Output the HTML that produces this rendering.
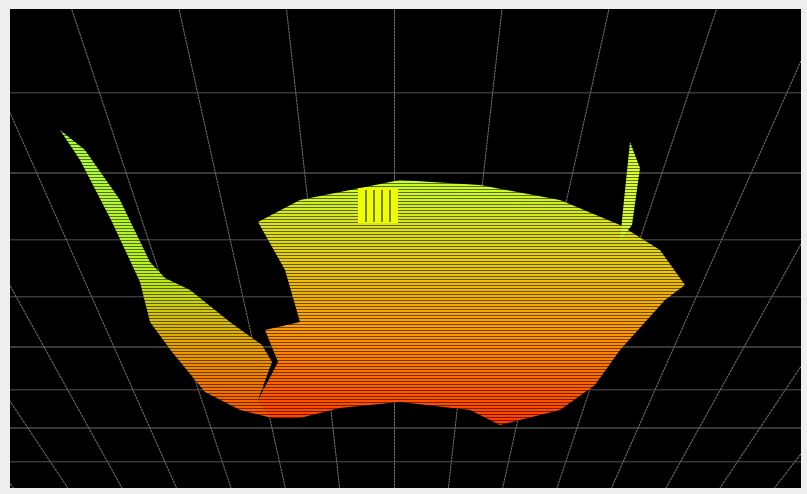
<!DOCTYPE html>
<html><head><meta charset="utf-8"><style>
html,body{margin:0;padding:0;background:#eeeeee;}
svg{display:block}
</style></head><body>
<svg width="807" height="494" viewBox="0 0 807 494" xmlns="http://www.w3.org/2000/svg">
<defs>
<clipPath id="c"><rect x="10" y="9" width="791" height="479"/></clipPath>
<linearGradient id="g" x1="0" y1="180" x2="0" y2="425" gradientUnits="userSpaceOnUse">
<stop offset="0" stop-color="#c8ff30"/>
<stop offset="0.35" stop-color="#e8c810"/>
<stop offset="0.65" stop-color="#ff9000"/>
<stop offset="1" stop-color="#ff3800"/>
</linearGradient>
<linearGradient id="gl" x1="0" y1="130" x2="0" y2="420" gradientUnits="userSpaceOnUse">
<stop offset="0" stop-color="#b0ff40"/>
<stop offset="0.5" stop-color="#b8f020"/>
<stop offset="0.75" stop-color="#e8a000"/>
<stop offset="1" stop-color="#ff5000"/>
</linearGradient>
<pattern id="p" width="4" height="3" patternUnits="userSpaceOnUse">
<rect width="4" height="1" fill="#000" opacity="0.55"/>
</pattern>
</defs>
<rect x="10" y="9" width="791" height="479" fill="#000"/>
<g clip-path="url(#c)" stroke="#707070" stroke-width="1">
<line x1="10" y1="93" x2="801" y2="93"/>
<line x1="10" y1="173" x2="801" y2="173"/>
<line x1="10" y1="240" x2="801" y2="240"/>
<line x1="10" y1="297" x2="801" y2="297"/>
<line x1="10" y1="347" x2="801" y2="347"/>
<line x1="10" y1="390" x2="801" y2="390"/>
<line x1="10" y1="428" x2="801" y2="428"/>
<line x1="10" y1="462" x2="801" y2="462"/>
<line x1="-365" y1="0" x2="13.5" y2="488"/>
<line x1="-257" y1="0" x2="67.8" y2="488"/>
<line x1="-148" y1="0" x2="122" y2="488"/>
<line x1="-40" y1="0" x2="176.5" y2="488"/>
<line x1="68.6" y1="0" x2="231" y2="488"/>
<line x1="177" y1="0" x2="285.3" y2="488"/>
<line x1="285.5" y1="0" x2="339.6" y2="488"/>
<line x1="394.5" y1="0" x2="394.5" y2="488"/>
<line x1="503" y1="0" x2="448.4" y2="488"/>
<line x1="611" y1="0" x2="502.7" y2="488"/>
<line x1="719.6" y1="0" x2="557" y2="488"/>
<line x1="828" y1="0" x2="611.5" y2="488"/>
<line x1="936" y1="0" x2="666" y2="488"/>
<line x1="1045" y1="0" x2="720" y2="488"/>
<line x1="1153" y1="0" x2="774.5" y2="488"/>
</g>
<g clip-path="url(#c)">
<polygon fill="url(#gl)" points="60,130 85,150 120,200 150,262 165,278 190,290 230,322 262,345 272,362 258,400 272,418 240,410 205,392 172,352 150,322 140,282 112,222 80,160"/>
<polygon fill="url(#g)" points="258,222 300,200 360,188 400,180 480,185 560,200 620,225 660,250 685,285 665,300 620,350 595,385 560,410 500,425 470,410 400,402 340,408 300,418 272,418 258,400 278,362 265,330 300,322 285,270"/>
<polygon fill="#d8ff30" points="630,142 640,168 632,225 620,240 624,200"/>
<rect x="0" y="0" width="807" height="494" fill="url(#p)"/>
<rect x="358" y="188" width="40" height="35" fill="#f0ff00"/>
<g stroke="#000" stroke-width="1"><line x1="366" y1="190" x2="366" y2="222"/><line x1="374" y1="190" x2="374" y2="222"/><line x1="382" y1="190" x2="382" y2="222"/><line x1="390" y1="190" x2="390" y2="222"/></g>
</g>
</svg>
</body></html>
